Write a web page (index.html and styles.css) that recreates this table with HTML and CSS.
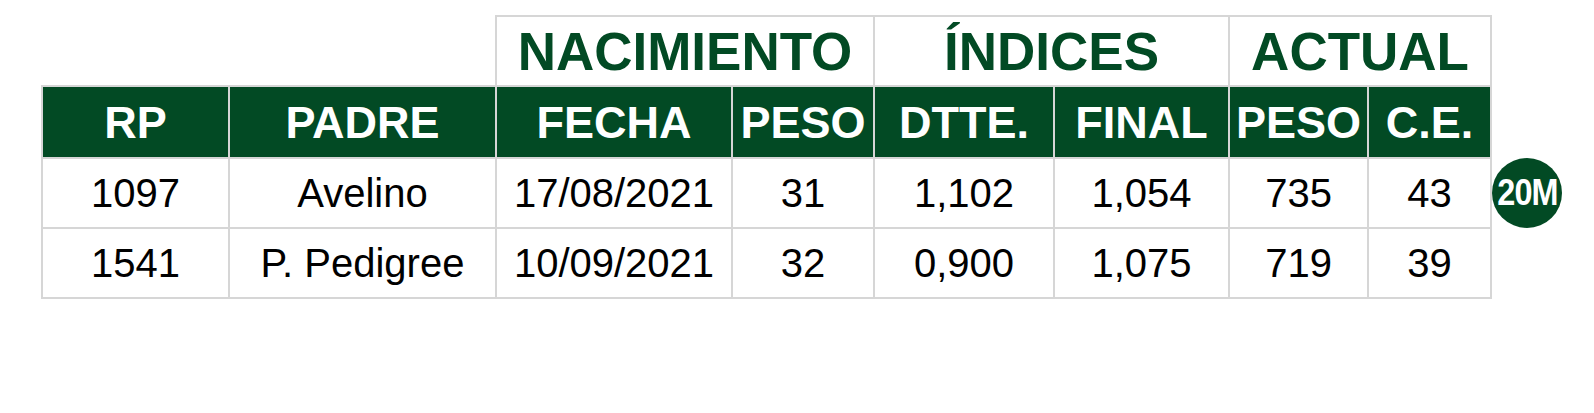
FILE: index.html
```html
<!DOCTYPE html>
<html lang="es">
<head>
<meta charset="utf-8">
<title>Tabla</title>
<link rel="stylesheet" href="styles.css">
</head>
<body>
<div class="page">
  <table class="grid">
    <colgroup>
      <col class="c-rp">
      <col class="c-padre">
      <col class="c-fecha">
      <col class="c-peso">
      <col class="c-dtte">
      <col class="c-final">
      <col class="c-apeso">
      <col class="c-ce">
      <col class="c-badge">
    </colgroup>
    <thead>
      <tr class="group-row">
        <th class="blank" colspan="2"></th>
        <th class="group" colspan="2">NACIMIENTO</th>
        <th class="group" colspan="2">ÍNDICES</th>
        <th class="group" colspan="2">ACTUAL</th>
      </tr>
      <tr class="head-row">
        <th class="head">RP</th>
        <th class="head">PADRE</th>
        <th class="head">FECHA</th>
        <th class="head">PESO</th>
        <th class="head">DTTE.</th>
        <th class="head">FINAL</th>
        <th class="head">PESO</th>
        <th class="head">C.E.</th>
      </tr>
    </thead>
    <tbody>
      <tr class="body-row">
        <td>1097</td>
        <td>Avelino</td>
        <td>17/08/2021</td>
        <td>31</td>
        <td>1,102</td>
        <td>1,054</td>
        <td>735</td>
        <td>43</td>
        <td class="badge-cell"><span class="badge"><span class="badge-text">20M</span></span></td>
      </tr>
      <tr class="body-row">
        <td>1541</td>
        <td>P. Pedigree</td>
        <td>10/09/2021</td>
        <td>32</td>
        <td>0,900</td>
        <td>1,075</td>
        <td>719</td>
        <td>39</td>
      </tr>
    </tbody>
  </table>
</div>
</body>
</html>
```

FILE: styles.css
```css
html, body {
  margin: 0;
  padding: 0;
  background: #ffffff;
}

.page {
  padding: 15px 0 0 41px;
  font-family: "Liberation Sans", Arial, Helvetica, sans-serif;
}

.grid {
  border-collapse: collapse;
  table-layout: fixed;
  width: 1521px;
}

.c-rp { width: 187px; }
.c-padre { width: 267px; }
.c-fecha { width: 236px; }
.c-peso { width: 142px; }
.c-dtte { width: 180px; }
.c-final { width: 175px; }
.c-apeso { width: 139px; }
.c-ce { width: 123px; }
.c-badge { width: 72px; }

.grid th,
.grid td {
  padding: 0;
  text-align: center;
  vertical-align: middle;
  white-space: nowrap;
  border: 2px solid #d6d6d6;
}

.group-row { height: 70px; }
.head-row { height: 72px; }
.body-row { height: 70px; }

.grid .blank {
  border: none;
}

.group {
  color: #024a24;
  font-size: 53px;
  font-weight: bold;
  line-height: 1;
}

.head {
  background: #024a24;
  color: #ffffff;
  font-size: 45px;
  font-weight: bold;
  line-height: 1;
}

.body-row td {
  color: #000000;
  font-size: 40px;
  font-weight: normal;
  line-height: 1;
}

.grid .badge-cell {
  border: none;
  text-align: left;
  padding-left: 0;
}

.badge {
  display: inline-flex;
  align-items: center;
  justify-content: center;
  width: 70px;
  height: 70px;
  border-radius: 50%;
  background: #024a24;
  color: #ffffff;
  vertical-align: middle;
  overflow: visible;
}

.badge-text {
  display: inline-block;
  font-size: 36px;
  font-weight: bold;
  letter-spacing: -1px;
  line-height: 1;
  transform: scaleX(0.9);
}
```
